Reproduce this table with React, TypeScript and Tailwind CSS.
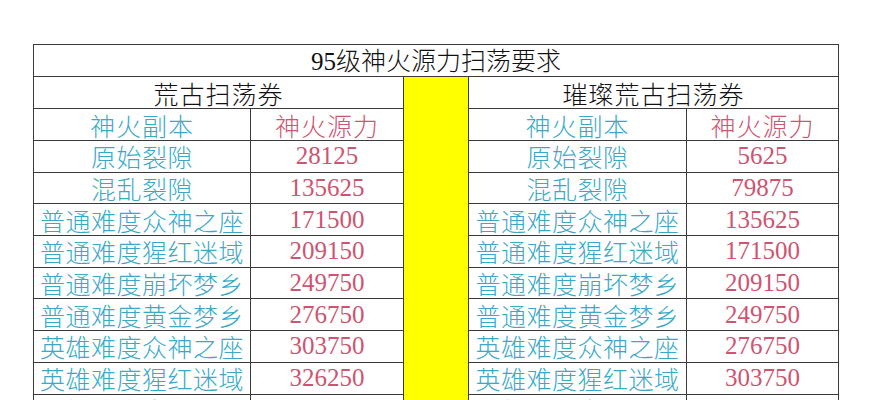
const rows: [string, string, string, string][] = [
  ["原始裂隙", "28125", "原始裂隙", "5625"],
  ["混乱裂隙", "135625", "混乱裂隙", "79875"],
  ["普通难度众神之座", "171500", "普通难度众神之座", "135625"],
  ["普通难度猩红迷域", "209150", "普通难度猩红迷域", "171500"],
  ["普通难度崩坏梦乡", "249750", "普通难度崩坏梦乡", "209150"],
  ["普通难度黄金梦乡", "276750", "普通难度黄金梦乡", "249750"],
  ["英雄难度众神之座", "303750", "英雄难度众神之座", "276750"],
  ["英雄难度猩红迷域", "326250", "英雄难度猩红迷域", "303750"],
  ["英雄难度崩坏梦乡", "353250", "英雄难度崩坏梦乡", "326250"],
];

const cjk = "font-[family-name:'Noto_Sans_CJK_SC',sans-serif] font-light";
const num = "font-[family-name:'Liberation_Serif',serif] font-normal";
const cell = "border border-[#3a3a3a] p-0 text-center leading-[26px] whitespace-nowrap";
const cyan = "text-[#3aa9c9]";
const red = "text-[#cf5470]";

export default function App() {
  return (
    <div className="w-[887px] h-[400px] bg-white overflow-hidden pt-[44px] pl-[33px]">
      <table className="table-fixed border-collapse w-[805px] text-[25px]">
        <colgroup>
          <col className="w-[217px]" />
          <col className="w-[153px]" />
          <col className="w-[65px]" />
          <col className="w-[218px]" />
          <col className="w-[152px]" />
        </colgroup>
        <tbody>
          <tr className="h-[32px]">
            <td colSpan={5} className={`${cell} ${cjk} text-[#111]`}>
              <span className={num}>95</span>级神火源力扫荡要求
            </td>
          </tr>
          <tr className="h-[32px]">
            <td colSpan={2} className={`${cell} ${cjk} text-[#111] tracking-[1px]`}>荒古扫荡券</td>
            <td rowSpan={rows.length + 2} className={`${cell} bg-[#ffff00] align-top`} />
            <td colSpan={2} className={`${cell} ${cjk} text-[#111] tracking-[1px]`}>璀璨荒古扫荡券</td>
          </tr>
          <tr className="h-[32px]">
            <td className={`${cell} ${cjk} ${cyan} tracking-[1px]`}>神火副本</td>
            <td className={`${cell} ${cjk} ${red} tracking-[1px]`}>神火源力</td>
            <td className={`${cell} ${cjk} ${cyan} tracking-[1px]`}>神火副本</td>
            <td className={`${cell} ${cjk} ${red} tracking-[1px]`}>神火源力</td>
          </tr>
          {rows.map((r) => (
            <tr key={r[0] + r[1]} className="h-[31.7px]">
              <td className={`${cell} ${cjk} ${cyan} tracking-[0.5px]`}>{r[0]}</td>
              <td className={`${cell} ${num} ${red}`}>{r[1]}</td>
              <td className={`${cell} ${cjk} ${cyan} tracking-[0.5px]`}>{r[2]}</td>
              <td className={`${cell} ${num} ${red}`}>{r[3]}</td>
            </tr>
          ))}
        </tbody>
      </table>
    </div>
  );
}
